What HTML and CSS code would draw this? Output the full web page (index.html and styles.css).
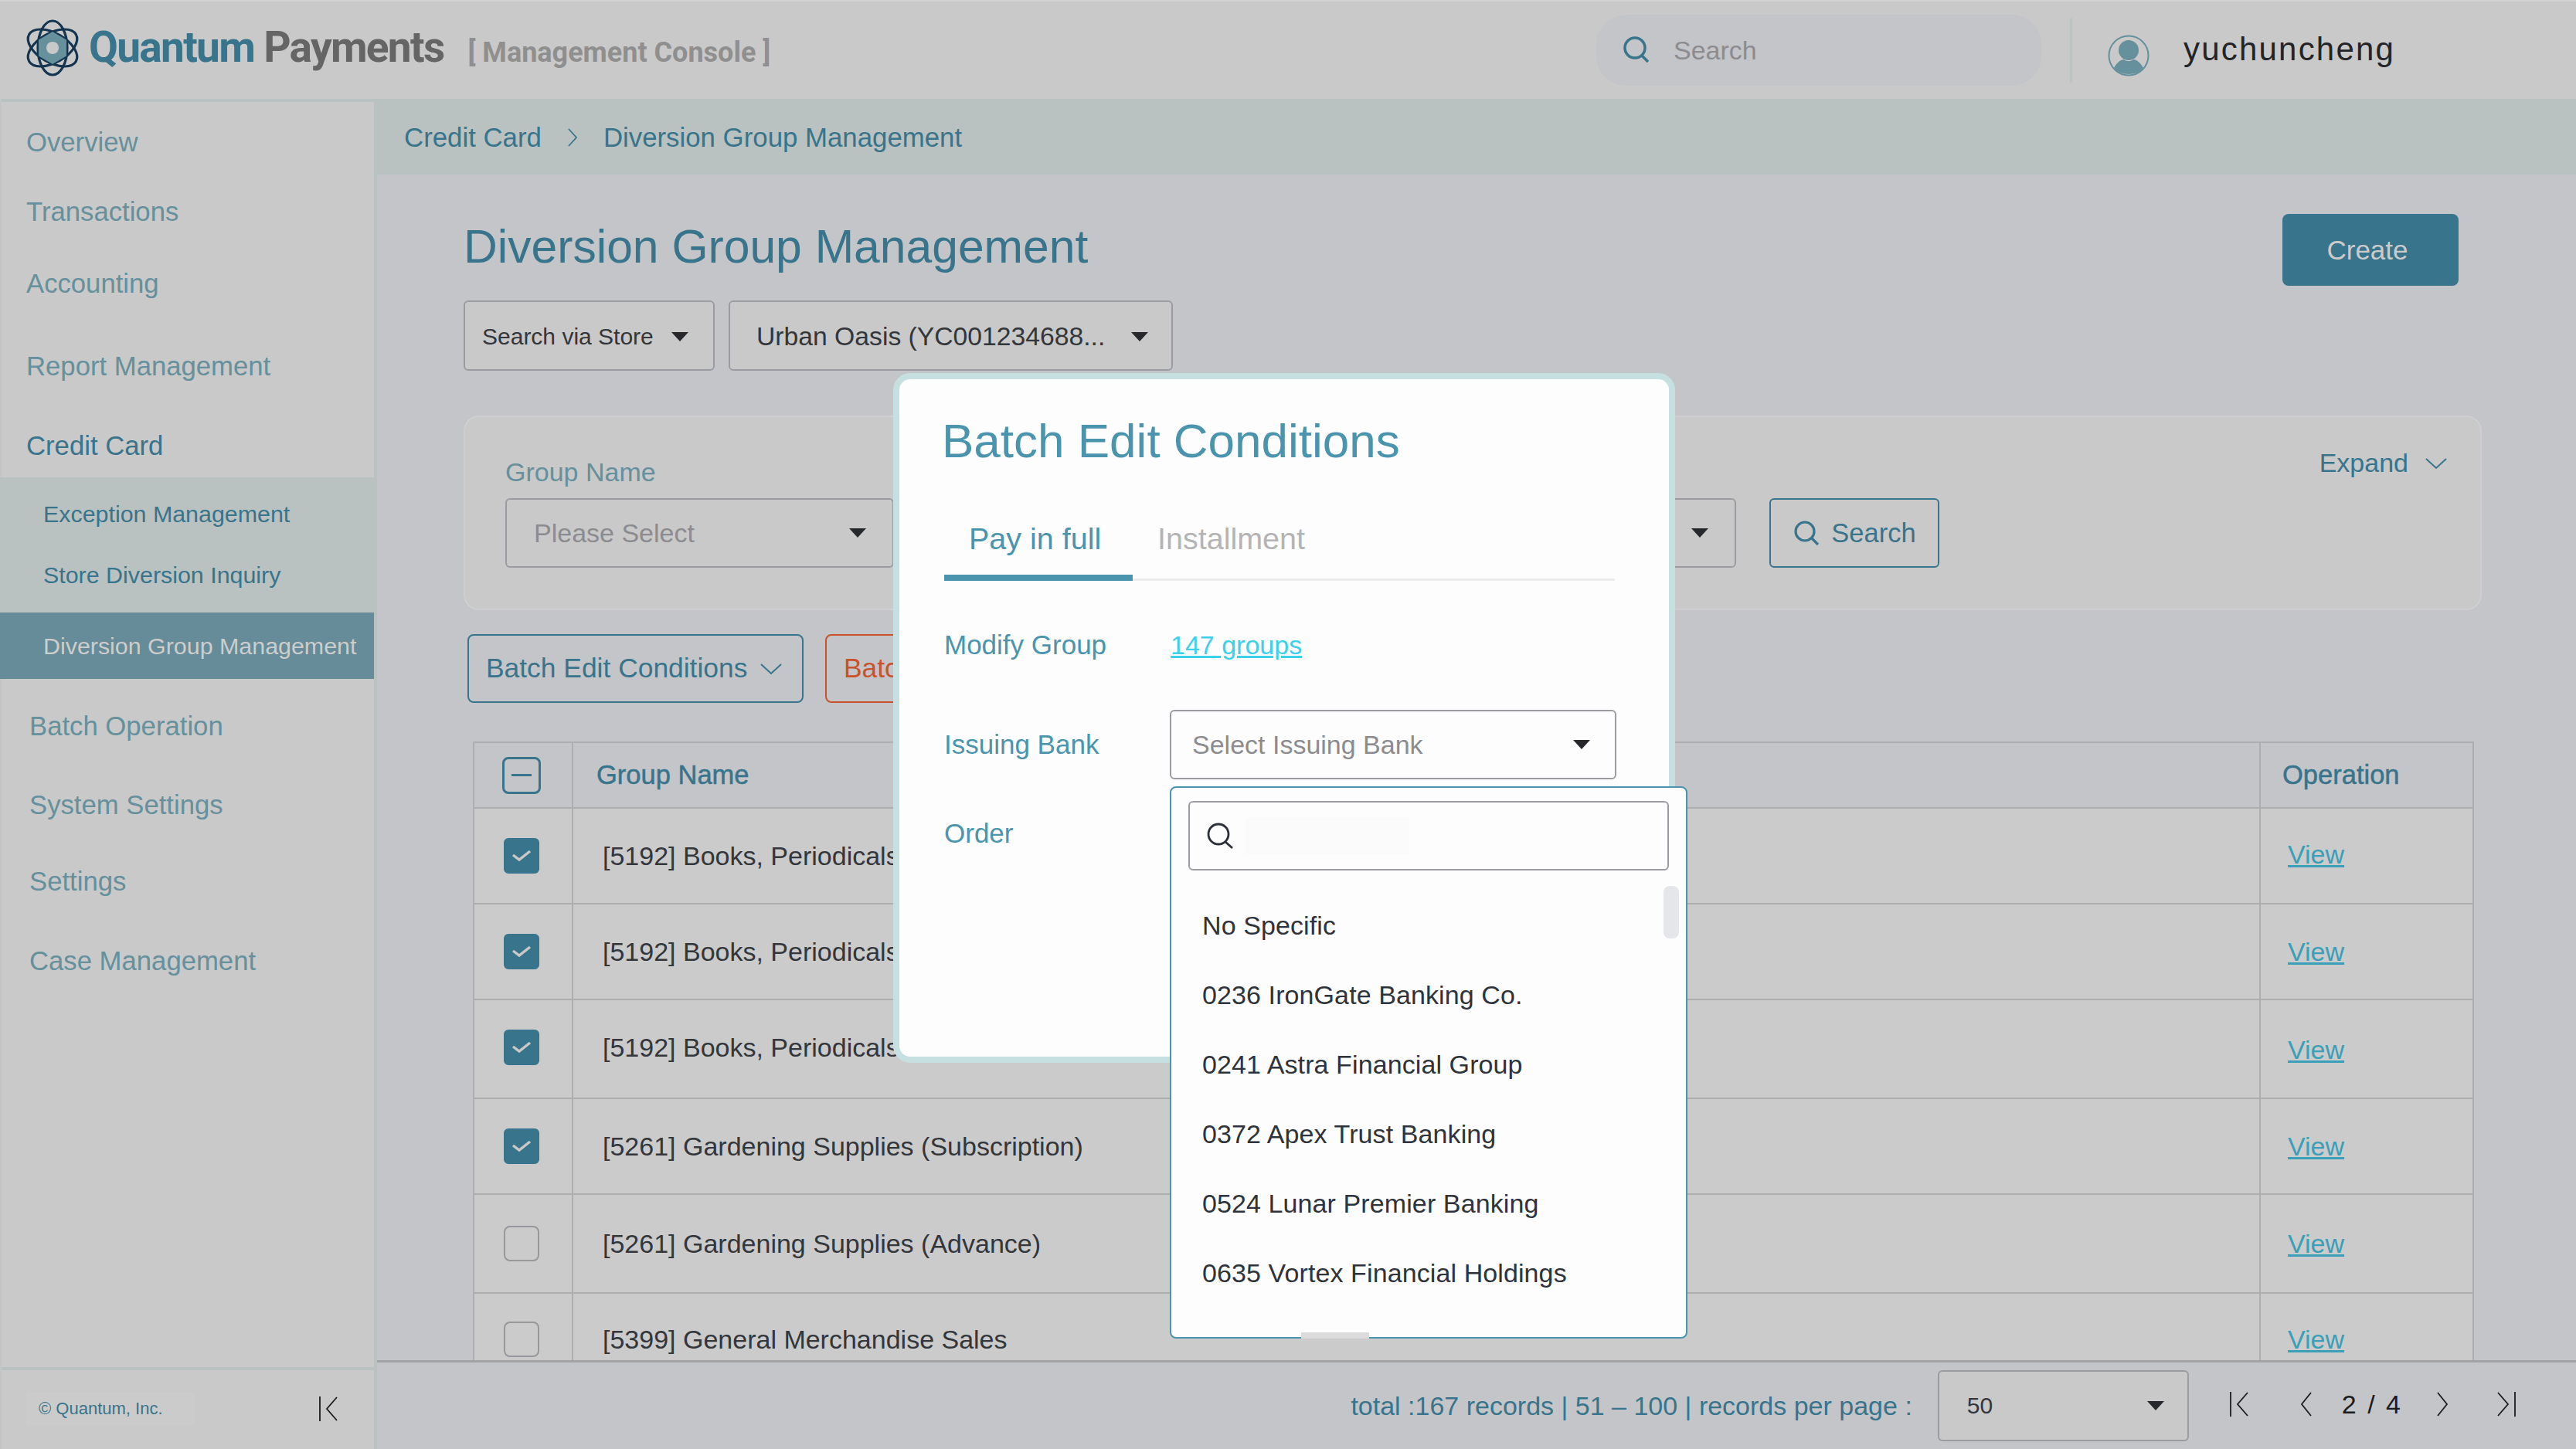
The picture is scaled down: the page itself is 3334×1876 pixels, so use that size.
FILE: index.html
```html
<!DOCTYPE html>
<html lang="en">
<head>
    <meta charset="UTF-8">
    <title>Diversion Group Management</title>
    <link rel="stylesheet" href="styles.css">
</head>
<body>
    <!-- Top bar -->
    <header class="topbar">
        <svg class="logo" width="74" height="76" viewBox="0 0 74 76">
            <g fill="none" stroke="#14344f" stroke-width="3.2">
                <ellipse cx="37" cy="38" rx="19" ry="35"/>
                <ellipse cx="37" cy="38" rx="19" ry="35" transform="rotate(60 37 38)"/>
                <ellipse cx="37" cy="38" rx="19" ry="35" transform="rotate(120 37 38)"/>
            </g>
            <polygon points="37,17 55,27.500 55,48.500 37,59 19,48.500 19,27.500" fill="#65909c"/>
            <circle cx="37" cy="38" r="8" fill="#c9c9c9"/>
        </svg>
        <div class="brand"><span class="brand-a">Quantum</span> <span class="brand-b">Payments</span></div>
        <div class="brand-sub">[ Management Console ]</div>
        <div class="top-search">
            <svg width="38" height="38" viewBox="0 0 38 38" fill="none" stroke="#38748b" stroke-width="3.500">
                <circle cx="17" cy="17" r="13"/><path d="M26 27l8 8"/>
            </svg>
            <span>Search</span>
        </div>
        <div class="top-divider"></div>
        <svg class="avatar" width="54" height="54" viewBox="0 0 54 54">
            <circle cx="27" cy="27" r="25.500" fill="none" stroke="#65909c" stroke-width="2"/>
            <circle cx="27" cy="20" r="13" fill="#65909c"/>
            <path d="M8 43c4-8 10-11 13-11 3 3 9 3 12 0 3 0 9 3 13 11-4 5-11 8-19 8s-15-3-19-8z" fill="#65909c"/>
        </svg>
        <div class="username">yuchuncheng</div>
    </header>

    <!-- Sidebar -->
    <aside class="sidebar">
        <nav class="nav">
            <a class="nav-item">Overview</a>
            <a class="nav-item">Transactions</a>
            <a class="nav-item accounting">Accounting</a>
            <a class="nav-item report">Report Management</a>
            <a class="nav-item credit">Credit Card</a>
            <div class="subnav">
                <a class="sub-item">Exception Management</a>
                <a class="sub-item">Store Diversion Inquiry</a>
                <a class="sub-item active">Diversion Group Management</a>
            </div>
            <a class="nav-item lower batch">Batch Operation</a>
            <a class="nav-item lower system">System Settings</a>
            <a class="nav-item lower settings">Settings</a>
            <a class="nav-item lower case">Case Management</a>
        </nav>
        <div class="side-foot">
            <span class="copyright">© Quantum, Inc.</span>
            <svg width="26" height="34" viewBox="0 0 26 34" fill="none" stroke="#1c1c1e" stroke-width="1.800">
                <path d="M2 1v32M24 2L11 17l13 15"/>
            </svg>
        </div>
    </aside>

    <!-- Main area -->
    <main class="main">
        <div class="crumbs">
            <span>Credit Card</span>
            <svg width="12" height="26" viewBox="0 0 12 26" fill="none" stroke="#38748b" stroke-width="1.800"><path d="M1 2l10 11L1 24"/></svg>
            <span>Diversion Group Management</span>
        </div>

        <div class="content">
            <div class="title-row">
                <h1>Diversion Group Management</h1>
                <button class="btn-create">Create</button>
            </div>

            <div class="store-row">
                <div class="select store-mode"><span>Search via Store</span><i class="caret"></i></div>
                <div class="select store-name"><span>Urban Oasis (YC001234688...</span><i class="caret"></i></div>
            </div>

            <section class="filter-card">
                <div class="field">
                    <label>Group Name</label>
                    <div class="select filter-select"><span class="placeholder">Please Select</span><i class="caret"></i></div>
                </div>
                <div class="field">
                    <label></label>
                    <div class="select filter-select wide"><i class="caret"></i></div>
                </div>
                <button class="btn-search">
                    <svg width="36" height="36" viewBox="0 0 36 36" fill="none" stroke="#38748b" stroke-width="3.200"><circle cx="16" cy="16" r="12"/><path d="M25 25l8 8"/></svg>
                    Search
                </button>
                <a class="expand">Expand
                    <svg width="30" height="16" viewBox="0 0 30 16" fill="none" stroke="#38748b" stroke-width="2"><path d="M2 2l13 12L28 2"/></svg>
                </a>
            </section>

            <div class="action-row">
                <button class="btn-batch">Batch Edit Conditions
                    <svg width="30" height="16" viewBox="0 0 30 16" fill="none" stroke="#38748b" stroke-width="2"><path d="M2 2l13 12L28 2"/></svg>
                </button>
                <button class="btn-danger">Batch</button>
            </div>

            <table class="groups">
                <thead>
                    <tr class="row-head">
                        <th class="col-check"><span class="check head"></span></th>
                        <th class="col-name">Group Name</th>
                        <th class="col-op">Operation</th>
                    </tr>
                </thead>
                <tbody>
                    <tr class="r1">
                        <td class="col-check"><span class="check on"><svg width="26" height="18" viewBox="0 0 26 18" fill="none" stroke="#c9c9c9" stroke-width="3.400"><path d="M2 8l8 6L24 3"/></svg></span></td>
                        <td class="col-name">[5192] Books, Periodicals</td>
                        <td class="col-op"><a class="view">View</a></td>
                    </tr>
                    <tr class="r2">
                        <td class="col-check"><span class="check on"><svg width="26" height="18" viewBox="0 0 26 18" fill="none" stroke="#c9c9c9" stroke-width="3.400"><path d="M2 8l8 6L24 3"/></svg></span></td>
                        <td class="col-name">[5192] Books, Periodicals</td>
                        <td class="col-op"><a class="view">View</a></td>
                    </tr>
                    <tr class="r3">
                        <td class="col-check"><span class="check on"><svg width="26" height="18" viewBox="0 0 26 18" fill="none" stroke="#c9c9c9" stroke-width="3.400"><path d="M2 8l8 6L24 3"/></svg></span></td>
                        <td class="col-name">[5192] Books, Periodicals</td>
                        <td class="col-op"><a class="view">View</a></td>
                    </tr>
                    <tr class="r4">
                        <td class="col-check"><span class="check on"><svg width="26" height="18" viewBox="0 0 26 18" fill="none" stroke="#c9c9c9" stroke-width="3.400"><path d="M2 8l8 6L24 3"/></svg></span></td>
                        <td class="col-name">[5261] Gardening Supplies (Subscription)</td>
                        <td class="col-op"><a class="view">View</a></td>
                    </tr>
                    <tr class="r5">
                        <td class="col-check"><span class="check"></span></td>
                        <td class="col-name">[5261] Gardening Supplies (Advance)</td>
                        <td class="col-op"><a class="view">View</a></td>
                    </tr>
                    <tr class="r6">
                        <td class="col-check"><span class="check"></span></td>
                        <td class="col-name">[5399] General Merchandise Sales</td>
                        <td class="col-op"><a class="view">View</a></td>
                    </tr>
                </tbody>
            </table>
        </div>

        <footer class="pager">
            <span class="pager-info">total :167 records | 51 – 100 | records per page :</span>
            <div class="select per-page"><span>50</span><i class="caret"></i></div>
            <div class="pager-nav">
                <svg width="26" height="32" viewBox="0 0 26 32" fill="none" stroke="#1c1c1e" stroke-width="1.800"><path d="M2 0v32M24 1L11 16l13 15"/></svg>
                <svg class="prev" width="16" height="32" viewBox="0 0 16 32" fill="none" stroke="#1c1c1e" stroke-width="1.800"><path d="M14 1L2 16l12 15"/></svg>
                <span class="page-no">2 / 4</span>
                <svg class="next" width="16" height="32" viewBox="0 0 16 32" fill="none" stroke="#1c1c1e" stroke-width="1.800"><path d="M2 1l12 15L2 31"/></svg>
                <svg class="last" width="26" height="32" viewBox="0 0 26 32" fill="none" stroke="#1c1c1e" stroke-width="1.800"><path d="M24 0v32M2 1l13 15L2 31"/></svg>
            </div>
        </footer>
    </main>

    <!-- Batch edit modal -->
    <div class="modal">
        <h2>Batch Edit Conditions</h2>
        <div class="tabs">
            <span class="tab current">Pay in full</span>
            <span class="tab">Installment</span>
        </div>
        <div class="form-row modify">
            <span class="form-label">Modify Group</span>
            <a class="groups-link">147 groups</a>
        </div>
        <div class="form-row issuing">
            <span class="form-label">Issuing Bank</span>
            <div class="select bank-select"><span class="placeholder">Select Issuing Bank</span><i class="caret"></i></div>
        </div>
        <div class="form-row order">
            <span class="form-label">Order</span>
        </div>
    </div>

    <!-- Issuing bank dropdown -->
    <div class="dropdown">
        <div class="dd-search">
            <svg width="38" height="36" viewBox="0 0 38 36" fill="none" stroke="#2c3038" stroke-width="2.800"><circle cx="17" cy="16" r="13"/><path d="M26 26l9 8"/></svg>
            <div class="dd-input"></div>
        </div>
        <ul class="dd-list">
            <li>No Specific</li>
            <li>0236 IronGate Banking Co.</li>
            <li>0241 Astra Financial Group</li>
            <li>0372 Apex Trust Banking</li>
            <li>0524 Lunar Premier Banking</li>
            <li>0635 Vortex Financial Holdings</li>
        </ul>
        <div class="dd-scroll"></div>
        <div class="dd-hscroll"></div>
    </div>
</body>
</html>
```

FILE: styles.css
```css
* {
    margin: 0;
    padding: 0;
    box-sizing: border-box;
}

body {
    width: 3334px;
    height: 1876px;
    overflow: hidden;
    display: grid;
    grid-template-columns: 488px 1fr;
    grid-template-rows: 128px 1fr;
    font-family: "Liberation Sans", Arial, sans-serif;
    font-size: 34px;
    background-color: #c4c5c9;
    color: #33363a;
}

button {
    font-family: inherit;
    cursor: pointer;
}

/* Top bar */
.topbar {
    grid-column: 1 / 3;
    display: flex;
    align-items: center;
    padding-left: 31px;
    background-color: #c9c9c9;
    border-top: 2px solid #d2d2d2;
}

.logo {
    margin-top: -6px;
}

.brand {
    margin-left: 10px;
    margin-top: -8px;
    font-family: "Roboto", sans-serif;
    font-size: 55px;
    font-weight: 700;
    letter-spacing: -1.700px;
}

.brand-a {
    color: #38748b;
}

.brand-b {
    color: #656565;
}

.brand-sub {
    margin-left: 31px;
    margin-top: 6px;
    font-family: "Roboto", sans-serif;
    font-size: 36px;
    font-weight: 700;
    letter-spacing: 0;
    color: #8f8f8f;
}

.top-search {
    display: flex;
    align-items: center;
    gap: 29px;
    width: 576px;
    height: 92px;
    margin-left: auto;
    padding-left: 33px;
    background-color: #c4c5c9;
    border-radius: 38px;
    color: #8c8c90;
}

.top-search svg {
    margin-top: -2px;
}

.top-divider {
    width: 3px;
    height: 84px;
    margin-left: 37px;
    background-color: #bcc5c4;
}

.avatar {
    margin-left: 46px;
    margin-top: 14px;
}

.username {
    width: 508px;
    margin-left: 44px;
    margin-top: -3px;
    font-size: 42px;
    letter-spacing: 2.200px;
    color: #232428;
}

/* Sidebar */
.sidebar {
    display: flex;
    flex-direction: column;
    background-color: #c9c9c9;
    border-right: 4px solid #b9c2c1;
    border-top: 4px solid #b9c2c1;
    margin-left: 2px;
}

.nav {
    padding-top: 7px;
}

.nav-item {
    display: flex;
    align-items: center;
    height: 90px;
    padding-left: 32px;
    font-size: 34.700px;
    color: #65909c;
}

.nav-item.accounting { margin-top: 3px; }
.nav-item.report { margin-top: 17px; }
.nav-item.credit {
    height: 86px;
    margin-top: 13px;
    padding-top: 4px;
    color: #38748b;
}
.nav-item.lower { padding-left: 36px; }
.nav-item.batch { margin-top: 16px; }
.nav-item.system { margin-top: 12px; }
.nav-item.settings { margin-top: 9px; }
.nav-item.case { margin-top: 13px; }

.subnav {
    margin-left: -2px;
    padding-top: 8px;
    background-color: #b9c2c1;
}

.sub-item {
    display: flex;
    align-items: center;
    height: 79px;
    padding-left: 56px;
    font-size: 30.400px;
    color: #38748b;
}

.sub-item.active {
    height: 86px;
    margin-top: 9px;
    background-color: #658c98;
    color: #cdcdcd;
}

.side-foot {
    display: flex;
    align-items: center;
    justify-content: space-between;
    height: 106px;
    margin-top: auto;
    padding: 0 46px 2px 32px;
    border-top: 4px solid #b9c2c1;
}

.copyright {
    width: 218px;
    padding: 8px 16px;
    font-size: 22px;
    color: #38748b;
    background-color: #cbcbcb;
}

/* Main area */
.main {
    display: flex;
    flex-direction: column;
    min-height: 0;
}

.crumbs {
    display: flex;
    align-items: center;
    gap: 34px;
    height: 98px;
    padding-left: 35px;
    padding-top: 2px;
    font-size: 34.800px;
    background-color: #b9c2c1;
    color: #38748b;
}

.content {
    flex: 1;
    min-height: 0;
    overflow: hidden;
    padding: 51px 122px 0 112px;
}

.title-row {
    display: flex;
    align-items: center;
    justify-content: space-between;
    height: 93px;
    padding-right: 30px;
}

h1 {
    margin-top: -10px;
    font-size: 60.600px;
    font-weight: 400;
    color: #38748b;
}

.btn-create {
    width: 228px;
    height: 93px;
    padding-right: 8px;
    border: none;
    border-radius: 8px;
    background-color: #38748b;
    color: #cbcbcb;
    font-size: 35px;
}

.store-row {
    display: flex;
    gap: 18px;
    margin-top: 19px;
}

.select {
    display: flex;
    align-items: center;
    justify-content: space-between;
    background-color: #c9c9c9;
    border: 2px solid #9b9ca1;
    border-radius: 6px;
}

.caret {
    width: 0;
    height: 0;
    border-left: 11px solid transparent;
    border-right: 11px solid transparent;
    border-top: 12px solid #26282c;
}

.placeholder {
    color: #8c8c90;
}

.store-mode {
    width: 325px;
    height: 91px;
    padding: 2px 32px 0 22px;
    font-size: 30px;
}

.store-name {
    width: 575px;
    height: 91px;
    padding: 2px 30px 0 34px;
    font-size: 33.700px;
}

.filter-card {
    position: relative;
    display: flex;
    height: 252px;
    margin-top: 58px;
    padding: 52px 0 0 52px;
    background-color: #c9c9c9;
    border: 2px solid #cfcfcf;
    border-radius: 20px;
}

.field label {
    display: block;
    height: 53px;
    color: #65909c;
}

.filter-select {
    width: 503px;
    height: 90px;
    padding: 0 34px 0 35px;
}

.filter-select.wide {
    justify-content: flex-end;
    width: 870px;
    margin-left: 220px;
}

.btn-search {
    display: flex;
    align-items: center;
    justify-content: center;
    gap: 14px;
    width: 220px;
    height: 90px;
    margin: 53px 0 0 43px;
    background: none;
    border: 2px solid #38748b;
    border-radius: 6px;
    color: #38748b;
    font-size: 34.500px;
}

.expand {
    position: absolute;
    top: 40px;
    right: 42px;
    display: flex;
    align-items: center;
    gap: 21px;
    color: #38748b;
}

.action-row {
    display: flex;
    gap: 28px;
    margin-top: 31px;
    margin-left: 5px;
}

.btn-batch,
.btn-danger {
    height: 89px;
    background: none;
    border-radius: 8px;
    font-size: 35.400px;
}

.btn-batch {
    display: flex;
    align-items: center;
    gap: 16px;
    width: 435px;
    padding-left: 22px;
    border: 2px solid #38748b;
    color: #38748b;
}

.btn-danger {
    width: 300px;
    padding-left: 22px;
    border: 2px solid #c9522a;
    color: #c9522a;
    text-align: left;
}

/* Table */
.groups {
    width: 2590px;
    margin-top: 50px;
    margin-left: 12px;
    border-collapse: collapse;
    table-layout: fixed;
}

.groups th,
.groups td {
    border: 2px solid #aeaeb0;
    vertical-align: middle;
    font-weight: 400;
    text-align: left;
}

.groups td {
    background-color: #cbcbcb;
    font-size: 34px;
}

.row-head { height: 85px; }
.r1, .r2 { height: 124px; }
.r3 { height: 128px; }
.r4 { height: 124px; }
.r5 { height: 128px; }
.r6 { height: 124px; }

.r3 .col-check,
.r3 .col-name,
.r6 .col-check,
.r6 .col-name,
.r6 .col-op {
    padding-bottom: 4px;
}

.r1 .col-op {
    padding-bottom: 3px;
}

.r3 .col-op {
    padding-top: 2px;
}

.col-check {
    width: 128px;
    padding-right: 4px;
    text-align: center !important;
}

.col-op {
    width: 276px;
    padding-left: 28px;
}

th.col-name,
th.col-op {
    font-size: 34.500px;
    color: #38748b;
    -webkit-text-stroke: 0.5px #38748b;
}

th.col-name {
    padding-left: 30px;
}

td.col-name {
    padding-left: 38px;
    white-space: nowrap;
}

td.col-op {
    padding-left: 35px;
    border-left-color: #c4c4c6;
}

.view {
    color: #3a9fb8;
    text-decoration: underline;
}

.check {
    display: inline-flex;
    align-items: center;
    justify-content: center;
    width: 46px;
    height: 46px;
    vertical-align: middle;
    border: 2px solid #98989c;
    border-radius: 8px;
}

.check.on {
    background-color: #38748b;
    border-color: #38748b;
    border-radius: 6px;
}

.check.head {
    position: relative;
    width: 50px;
    height: 48px;
    border: 3.500px solid #38748b;
}

.check.head::after {
    content: '';
    width: 26px;
    height: 3px;
    background-color: #38748b;
}

/* Footer pager */
.pager {
    display: flex;
    align-items: center;
    justify-content: flex-end;
    height: 115px;
    padding-right: 77px;
    background-color: #c4c5c9;
    border-top: 3px solid #a3a3a6;
}

.pager-info {
    color: #38748b;
}

.per-page {
    width: 325px;
    height: 92px;
    margin-left: 33px;
    margin-top: -1px;
    padding: 0 30px 0 36px;
    font-size: 30px;
}

.pager-nav {
    display: flex;
    align-items: center;
    margin-left: 52px;
    margin-top: -4px;
    color: #1c1c1e;
}

.prev { margin-left: 66px; }
.page-no {
    margin: 0 46px 0 38px;
    word-spacing: 5px;
}
.next { margin-left: 0; }
.last { margin-left: 62px; }

/* Modal */
.modal {
    position: absolute;
    top: 483px;
    left: 1156px;
    width: 1012px;
    height: 893px;
    padding: 44px 0 0 58px;
    background-color: #fdfdfd;
    border: 8px solid #c6dfe0;
    border-radius: 22px;
}

.modal h2 {
    margin-left: -3px;
    font-size: 62px;
    font-weight: 400;
    color: #4b94ad;
}

.tabs {
    display: flex;
    width: 868px;
    height: 83px;
    margin-top: 63px;
    border-bottom: 3px solid #ececec;
}

.tab {
    height: 83px;
    padding: 0 32px;
    font-size: 39.500px;
    line-height: 56px;
    color: #b4b4b4;
}

.tab.current {
    width: 244px;
    border-bottom: 8px solid #4b94ad;
    color: #4b94ad;
}

.form-row {
    display: flex;
    align-items: center;
}

.form-label {
    width: 292px;
    font-size: 35px;
    color: #4b94ad;
}

.modify { margin-top: 62px; }
.issuing { margin-top: 64px; }
.order { margin-top: 50px; }

.groups-link {
    margin-top: 2px;
    margin-left: 1px;
    color: #3cd0ea;
    text-decoration: underline;
}

.bank-select {
    width: 578px;
    height: 90px;
    padding: 0 32px 0 27px;
    background-color: #fdfdfd;
}

/* Dropdown over the modal */
.dropdown {
    position: absolute;
    top: 1018px;
    left: 1514px;
    width: 670px;
    height: 715px;
    padding: 17px 22px 0;
    background-color: #fdfdfd;
    border: 2px solid #4b94ad;
    border-radius: 8px;
}

.dd-search {
    display: flex;
    align-items: center;
    gap: 14px;
    height: 90px;
    padding-left: 20px;
    border: 2px solid #9b9ca1;
    border-radius: 6px;
}

.dd-input {
    width: 212px;
    height: 47px;
    background-color: #fbfbfb;
}

.dd-list {
    list-style: none;
    margin-top: 26px;
    padding-left: 18px;
    letter-spacing: 0.100px;
    color: #2f333b;
}

.dd-list li {
    height: 90px;
    line-height: 90px;
}

.dd-scroll {
    position: absolute;
    top: 127px;
    right: 9px;
    width: 20px;
    height: 68px;
    background-color: #e4e6ea;
    border-radius: 8px;
}

.dd-hscroll {
    position: absolute;
    bottom: -2px;
    left: 168px;
    width: 88px;
    height: 8px;
    background-color: #dcdcdc;
}
```
